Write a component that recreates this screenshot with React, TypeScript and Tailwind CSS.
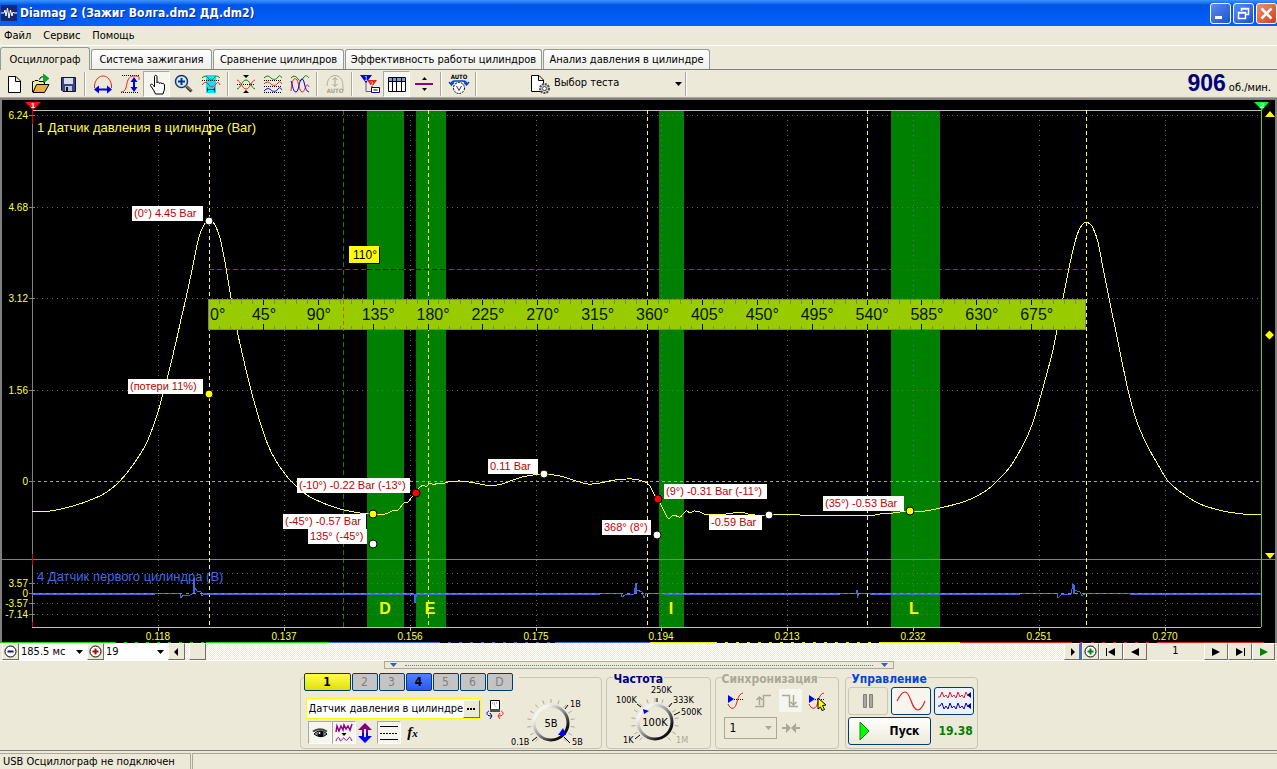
import type { ReactNode } from 'react'
import { clsx } from 'clsx'

const TABS = [
  { label: 'Осциллограф', width: 'w-[90px]' },
  { label: 'Система зажигания', width: 'w-[121px]' },
  { label: 'Сравнение цилиндров', width: 'w-[131px]' },
  { label: 'Эффективность работы цилиндров', width: 'w-[197px]' },
  { label: 'Анализ давления в цилиндре', width: 'w-[167px]' },
]

const TIME_TICKS = [
  { x: 158, label: '0.118' },
  { x: 284, label: '0.137' },
  { x: 410, label: '0.156' },
  { x: 536, label: '0.175' },
  { x: 661, label: '0.194' },
  { x: 787, label: '0.213' },
  { x: 913, label: '0.232' },
  { x: 1039, label: '0.251' },
  { x: 1165, label: '0.270' },
]

const PRESSURE_TICKS = [
  { y: 115, label: '6.24' },
  { y: 207, label: '4.68' },
  { y: 298, label: '3.12' },
  { y: 390, label: '1.56' },
  { y: 481, label: '0' },
]

const SYNC_TICKS = [
  { y: 583, label: '3.57' },
  { y: 593, label: '0' },
  { y: 603, label: '-3.57' },
  { y: 614, label: '-7.14' },
]

const BANDS = [
  { x: 367, w: 37, letter: 'D', at: 385 },
  { x: 416, w: 30, letter: 'E', at: 430 },
  { x: 659, w: 25, letter: 'I', at: 671 },
  { x: 891, w: 49, letter: 'L', at: 914 },
]

const STROKES = [209, 428, 647, 867, 1086]

const CALLOUTS = [
  { x: 132, y: 206, w: 71, text: '(0°) 4.45 Bar' },
  { x: 128, y: 379, w: 75, text: '(потери 11%)' },
  { x: 297, y: 478, w: 113, text: '(-10°) -0.22 Bar (-13°)' },
  { x: 283, y: 514, w: 83, text: '(-45°) -0.57 Bar' },
  { x: 308, y: 529, w: 59, text: '135° (-45°)' },
  { x: 488, y: 459, w: 50, text: '0.11 Bar' },
  { x: 602, y: 520, w: 49, text: '368° (8°)' },
  { x: 664, y: 484, w: 103, text: '(9°) -0.31 Bar (-11°)' },
  { x: 709, y: 515, w: 53, text: '-0.59 Bar' },
  { x: 823, y: 496, w: 81, text: '(35°) -0.53 Bar' },
]

const MARKERS = [
  { x: 209, y: 221, fill: '#ffffff' },
  { x: 209, y: 394, fill: '#ffff00' },
  { x: 373, y: 514, fill: '#ffff00' },
  { x: 373, y: 544, fill: '#ffffff' },
  { x: 416, y: 493, fill: '#ff0000' },
  { x: 544, y: 474, fill: '#ffffff' },
  { x: 658, y: 499, fill: '#ff0000' },
  { x: 657, y: 535, fill: '#ffffff' },
  { x: 769, y: 515, fill: '#ffffff' },
  { x: 910, y: 511, fill: '#ffff00' },
]

const PRESSURE =
  '32,512 50,511 73,506 93,499 107,492 120,481 133,465 147,442 158,412 163,393 168,375 176,342 182,315 186,298 192,270 197,245 200,234 203,227 206,222 209,221 212,222 215,225 220,238 225,262 231,298 237,330 243,357 251,390 260,422 268,445 276,461 285,474 292,482 307,495 323,503 340,509 360,513 373,514 385,514 392,511 398,510 404,503 408,502 412,497 416,492 420,487 424,485 426,487 430,483 434,485 437,483 442,484 448,482 460,481 475,483 485,485 497,485 505,483 513,480 522,477 533,475 543,474 560,476 573,480 588,484 600,483 615,480 632,479 645,482 650,486 654,494 658,499 662,507 667,517 670,518 674,515 680,517 686,511 690,513 694,511 700,512 704,514 712,514 726,514 740,512 748,514 755,515 769,515 785,514 800,515 830,516 875,515 880,514 893,513 900,512 909,511 925,511 940,508 960,503 973,498 987,490 997,481 1010,467 1023,445 1032,425 1039,402 1047,373 1053,350 1057,330 1063,298 1069,268 1075,242 1079,230 1083,224 1086,222 1090,224 1093,228 1098,242 1103,268 1109,298 1117,337 1128,390 1137,422 1147,445 1157,463 1168,481 1182,493 1200,504 1223,511 1243,514 1252,515 1261,514'

const FIRST_CYLINDER =
  'M155 593.500H180L181 598L183 595H190L192 594L193 593L194 578L195 588L197 591L201 592L202 596L204 593.500M414 593.500L415 603L416 597V593.500M600 593.500H621L622 597L625 595L634 594L636 583L637 590L642 592L644 598L646 593.500H664M840 593.500H856L857 590V598L859 593.500H870M1020 593.500H1057L1058 598L1061 595L1071 594L1073 584L1074 590L1080 592L1082 596L1085 593.500H1130'

// left edge of the ruler and pixels per crank degree
const RULER_X = 208
const DEGREE = 878 / 720

// Catmull-Rom spline through "x,y x,y ..." samples
function smooth(samples: string) {
  const p = samples.split(' ').map(s => s.split(',').map(Number))
  const at = (i: number) => p[Math.min(Math.max(i, 0), p.length - 1)]
  let d = `M${p[0][0]} ${p[0][1]}`
  for (let i = 0; i < p.length - 1; i++) {
    const [a, b, c, e] = [at(i - 1), at(i), at(i + 1), at(i + 2)]
    d += `C${b[0] + (c[0] - a[0]) / 6} ${b[1] + (c[1] - a[1]) / 6} ${c[0] - (e[0] - b[0]) / 6} ${c[1] - (e[1] - b[1]) / 6} ${c[0]} ${c[1]}`
  }
  return d
}

function Chart() {
  const minor = Array.from({ length: 79 }, (_, i) => (i + 1) * 9)
  const major = Array.from({ length: 16 }, (_, i) => i * 45)

  return (
    <svg
      viewBox="0 98 1277 545"
      className="block w-full h-auto font-['Liberation_Sans',Arial,sans-serif]"
      role="img"
      aria-label="Осциллограмма давления"
    >
      <rect x="0" y="98" width="1277" height="545" fill="#808080" />
      <rect x="2" y="100" width="1273" height="543" fill="#000" />
      <g shapeRendering="crispEdges" fill="none">
        {BANDS.map(b => (
          <rect key={b.letter} x={b.x} y="110" width={b.w} height="517" fill="#008000" />
        ))}

        {/* grid */}
        {TIME_TICKS.map(t => (
          <path key={t.x} d={`M${t.x + 0.5} 115V627`} stroke="#6b6b6b" strokeDasharray="1 4" />
        ))}
        {[115, 207, 298, 390, 573, 583, 603, 614].map(y => (
          <path key={y} d={`M32 ${y + 0.5}H1261`} stroke="#6b6b6b" strokeDasharray="1 4" />
        ))}
        <path d="M32 481.500H1261" stroke="#a0a0a0" strokeDasharray="3 3" />
        <path d="M209 269.500H1086M343.500 110V627" stroke="#1a7a1a" strokeDasharray="5 3" />
        <path d="M367 269.500H404M416 269.500H446" stroke="#000" strokeDasharray="5 3" />

        {/* axes */}
        <path d="M32 110.500H1261M32 627.500H1261" stroke="#c0c0c0" />
        <path d="M32.500 110V627M2 559.500H1275" stroke="#808080" />
        {[...PRESSURE_TICKS, ...SYNC_TICKS].map(t => (
          <path key={t.y} d={`M29 ${t.y + 0.5}H35`} stroke="#808080" />
        ))}
        {TIME_TICKS.map(t => (
          <path key={t.x} d={`M${t.x + 0.5} 628V631`} stroke="#c0c0c0" />
        ))}
        {STROKES.map(x => (
          <path key={x} d={`M${x + 0.5} 110V627`} stroke="#ffff40" strokeDasharray="4 3" />
        ))}
        <path d="M32.500 103V124M32.500 554V565M32.500 622V627" stroke="#e00000" />
        <path d="M1261.500 104V627" stroke="#40d050" />

        {/* signals */}
        <path d={smooth(PRESSURE)} stroke="#ffff55" />
        <path d="M32 594H155M204 594H414M416 594H600M664 594H840M870 594H1020M1130 594H1261" stroke="#4169e1" strokeWidth="2" />
        <path d={FIRST_CYLINDER} stroke="#4169e1" />
        <path d="M194 594V580M636 594V584M1074 594V585M415 594V602" stroke="#4169e1" strokeWidth="2" />
        <path d="M32 593.500H1261" stroke="#7d90b8" strokeDasharray="3 4" />
      </g>

      {/* crank angle ruler */}
      <g shapeRendering="crispEdges">
        <rect x="208.500" y="299.500" width="877" height="30" fill="#99cc00" stroke="#808080" />
        {minor.map(d => (
          <path
            key={d}
            d={
              d % 45 === 0
                ? `M${Math.round(RULER_X + d * DEGREE) + 0.5} 300v5m0 19v6`
                : `M${Math.round(RULER_X + d * DEGREE) + 0.5} 300v4m0 22v4`
            }
            stroke={d % 45 === 0 ? '#000' : '#808080'}
          />
        ))}
        <path d="M343.500 300V329" stroke="#b06a00" strokeDasharray="4 3" />
      </g>
      {major.map(d => (
        <text key={d} x={RULER_X + d * DEGREE - (d === 0 ? -2 : 11)} y="320" fontSize="16" fill="#0a1400">
          {`${d}°`}
        </text>
      ))}

      <rect x="350" y="247" width="30" height="17" fill="#000" />
      <rect x="349" y="246" width="30" height="17" fill="#ffff00" />
      <text x="353" y="259" fontSize="12">110°</text>

      {CALLOUTS.map(c => (
        <g key={c.text}>
          <rect x={c.x} y={c.y} width={c.w} height="15" fill="#fff" />
          <text x={c.x + 2} y={c.y + 11} fontSize="11" fill="#c00000">{c.text}</text>
        </g>
      ))}
      {MARKERS.map(m => (
        <circle key={`${m.x}-${m.y}`} cx={m.x} cy={m.y} r="4" fill={m.fill} stroke="#000" />
      ))}

      <text x="37" y="132" fontSize="13" fill="#ffff40">1 Датчик давления в цилиндре (Bar)</text>
      <text x="37" y="581" fontSize="13" fill="#4169e1">4 Датчик первого цилиндра (B)</text>
      {BANDS.map(b => (
        <text key={b.letter} x={b.at} y="614" fontSize="16" fontWeight="700" fill="#ffff00" textAnchor="middle">
          {b.letter}
        </text>
      ))}
      {[...PRESSURE_TICKS, ...SYNC_TICKS].map(t => (
        <text key={t.y} x="28" y={t.y + 4} fontSize="10" fill="#ffff40" textAnchor="end">{t.label}</text>
      ))}
      {TIME_TICKS.map(t => (
        <text key={t.x} x={t.x} y="640" fontSize="10" fill="#ffff40" textAnchor="middle">{t.label}</text>
      ))}

      {/* cursors and scale handles */}
      <path d="M25 102H41L33 110Z" fill="#ff1010" />
      <path d="M1254 102H1269L1262 110Z" fill="#00ff20" />
      <text x="33" y="108" fontSize="8" fontWeight="700" fill="#fff" textAnchor="middle">1</text>
      <text x="1262" y="108" fontSize="8" fontWeight="700" fill="#fff" textAnchor="middle">2</text>
      <path d="M1265 117H1275L1270 111ZM1265 553H1275L1270 559ZM1265 335L1269.500 330.500L1274 335L1269.500 339.500Z" fill="#ffff00" />

      {/* memory strip */}
      <g shapeRendering="crispEdges" fill="none">
        <path d="M2 642.500H330" stroke="#00e000" />
        <path d="M330 642.500H650" stroke="#4169e1" />
        <path d="M650 642.500H960" stroke="#e8e800" />
        <path d="M960 642.500H1264" stroke="#e02020" />
        <path d="M116 642.500H206M440 642.500H555M717 642.500H880M1072 642.500H1160" stroke="#000" strokeDasharray="8 3" />
      </g>
    </svg>
  )
}

function Icon({ children, className = 'w-[22px] h-[22px]', box = '0 0 22 22' }: { children: ReactNode; className?: string; box?: string }) {
  return (
    <svg viewBox={box} className={clsx('shrink-0', className)} fill="none" aria-hidden="true">
      {children}
    </svg>
  )
}

const ICONS: Record<string, ReactNode> = {
  new: <path d="M5.500 3.500H13L17.500 8V19.500H5.500ZM12.500 4V8.500H17" fill="#fff" stroke="#000" />,
  open: (
    <>
      <path d="M2.500 19V8.500H4L5 7.500H8L9 8.500H14.500V12" fill="#ffe890" stroke="#000" />
      <path d="M3 19.500L6.500 11.500H19L14.500 19.500Z" fill="#e8b040" stroke="#000" />
      <path d="M9.500 6.500C10 4 12 3.500 13.500 4" stroke="#000" />
      <path d="M13.500 1L19 5.500L13.500 10Z" fill="#00b020" stroke="#006010" strokeWidth=".5" />
    </>
  ),
  save: (
    <>
      <path d="M4.500 4.500H18.500V18.500H6L4.500 17Z" fill="#3c4488" stroke="#101030" />
      <path d="M7 5H16V11H7Z" fill="#d8dce8" />
      <path d="M8 13H15V18H8Z" fill="#c0c4d0" />
      <path d="M9 14H11V18H9Z" fill="#101030" />
    </>
  ),
  fitX: (
    <>
      <path d="M2.500 15V12C4 5 8 3 11 3S18 5 19.500 12V15" stroke="#f02020" />
      <path d="M5 16.500H17" stroke="#0000e0" strokeWidth="2" />
      <path d="M2 16.500L7 12.500V20.500ZM20 16.500L15 12.500V20.500Z" fill="#0000e0" />
    </>
  ),
  fitY: (
    <>
      <path d="M3 2.500H20M2 19.500H20" stroke="#000" strokeDasharray="1 1" />
      <path d="M2 19C8 19 7 11 9 7S13 3 17 3S20 5 20 7" stroke="#f02020" />
      <path d="M15 8V16" stroke="#0000e0" strokeWidth="2" />
      <path d="M15 4L11.500 9H18.500ZM15 19L11.500 14H18.500Z" fill="#0000e0" />
    </>
  ),
  hand: (
    <path
      d="M9.500 21L7.500 17L4.500 12.500C4 11 6 10.500 7.500 12.500L8.500 14V3.500C8.500 2 11 2 11 3.500V10C11 8.800 13.500 8.800 13.500 10.500C13.500 9.500 16 9.500 16 11C16 10 18.500 10.500 18.500 12V16L17 21Z"
      fill="#fff"
      stroke="#000"
    />
  ),
  zoom: (
    <>
      <path d="M13.500 13.500L18.500 18.500" stroke="#303030" strokeWidth="3" />
      <path d="M13.500 13L18 17.500" stroke="#e8c060" />
      <circle cx="8.500" cy="8.500" r="6" fill="#c8f0ff" stroke="#203070" strokeWidth="1.500" />
      <path d="M5 8.500H12M8.500 5V12" stroke="#103080" strokeWidth="2" />
    </>
  ),
  slice: (
    <>
      <path d="M6 2H16V20H6Z" fill="#00e8f0" />
      <path d="M2 5C5 2 7 3 9 6S13 6 15 4S19 4 20 5" stroke="#008000" />
      <path d="M2 7.500H20" stroke="#000" strokeDasharray="1 1" />
      <path d="M2 12C5 8 7 9 9 12S14 14 16 11S19 10 20 12" stroke="#f02020" />
      <path d="M7 16.500H15M7.500 14.500V18.500M14.500 14.500V18.500" stroke="#0000a0" />
    </>
  ),
  center: (
    <>
      <path d="M8 2H14L11 5ZM8 20H14L11 17Z" fill="#000" />
      <path d="M2 11.500H20" stroke="#000" strokeDasharray="1 1" />
      <path d="M2 16C6 15 7 7 11 7S16 15 20 16" stroke="#008000" />
      <path d="M2 7C6 8 7 16 11 16S16 8 20 7" stroke="#f02020" />
    </>
  ),
  spread: (
    <>
      <path d="M2 7.500H20M2 13.500H20M2 19.500H20" stroke="#000" strokeDasharray="1 1" />
      <path d="M2 5C5 2 7 3 9 5S14 7 16 4S19 4 20 5" stroke="#008000" />
      <path d="M2 11C5 8 7 9 9 11S14 13 16 10S19 10 20 11" stroke="#f02020" />
      <path d="M2 18C5 15 7 15 9 17S14 19 16 16S19 16 20 17" stroke="#0000e0" />
    </>
  ),
  overlay: (
    <>
      <path d="M2 5C5 2 7 3 9 6S13 7 15 4S19 4 20 5" stroke="#008000" />
      <path d="M2 18C3 5 6 4 8 7S10 18 13 19S17 7 20 14" stroke="#f02020" />
      <path d="M2 8C4 13 4 19 7 19S10 6 13 6S15 18 20 19" stroke="#0000e0" />
    </>
  ),
  autoScale: (
    <>
      <path d="M3 13C3 6 7 2.500 11 2.500S19 6 19 13V18" stroke="#b0ad9c" />
      <path d="M11 5V13M8.500 7L11 4.500L13.500 7M8.500 11L11 13.500L13.500 11" stroke="#a5a290" />
      <text x="11" y="20" fontSize="6" fontWeight="700" textAnchor="middle" fill="#a5a290">AUTO</text>
    </>
  ),
  cursors: (
    <>
      <path d="M7 8V18.500H12M13 12V15" stroke="#606080" />
      <path d="M8 7H18L13 14Z" fill="#e02020" />
      <path d="M1 2H13L7 10Z" fill="#0000e0" />
      <path d="M12.500 14.500H20.500V19.500H12.500Z" fill="#fff" stroke="#000080" />
      <path d="M14.500 17H18.500" stroke="#000" />
      <text x="7" y="8" fontSize="7" fill="#fff" textAnchor="middle">1</text>
      <text x="13" y="13" fontSize="6" fill="#fff" textAnchor="middle">2</text>
    </>
  ),
  table: (
    <>
      <path d="M2.500 4.500H19.500V18.500H2.500Z" fill="#fff" stroke="#000" />
      <path d="M3 5H19V8H3Z" fill="#70a0e0" />
      <path d="M2 8.500H20M6.500 5V18M10.500 5V18M15.500 5V18" stroke="#000" />
    </>
  ),
  divide: (
    <>
      <path d="M2 11H20" stroke="#900080" strokeWidth="2" />
      <path d="M9 7H14L11.500 4ZM9 15H14L11.500 18Z" fill="#000" />
    </>
  ),
  autoV: (
    <>
      <text x="11" y="6" fontSize="6" fontWeight="700" textAnchor="middle" fill="#000">AUTO</text>
      <path d="M3 11C4 7 7 8 11 8S18 7 19 11M1 9L3.500 12L6 9.500M21 9L18.500 12L16 9.500" stroke="#0040e0" strokeWidth="1.500" />
      <circle cx="11" cy="15" r="5.500" fill="#fff" stroke="#000" strokeDasharray="2 1" />
      <path d="M8.500 13L11 17.500L13.500 13" stroke="#303080" />
    </>
  ),
  test: (
    <>
      <path d="M1.500 1.500H9L13.500 6V17.500H1.500ZM8.500 2V6.500H13" fill="#fff" stroke="#000" />
      <circle cx="14.500" cy="14.500" r="4.500" fill="#c8c8c8" stroke="#505050" strokeWidth="2" strokeDasharray="2 1" />
      <circle cx="14.500" cy="14.500" r="2" fill="#fff" stroke="#505050" />
    </>
  ),
}

const TOOLBAR = [
  ['new', 'open', 'save'],
  ['fitX', 'fitY', 'hand', 'zoom', 'slice'],
  ['center', 'spread', 'overlay'],
  ['autoScale'],
  ['cursors', 'table', 'divide'],
  ['autoV'],
]

const PRESSED = ['hand', 'table']

function Separator() {
  return (
    <div className="w-2 shrink-0 flex justify-center">
      <div className="w-[2px] h-6 border-l border-[#aca899] bg-white" />
    </div>
  )
}

function Toolbar() {
  return (
    <div className="flex items-center h-7 border-b border-[#aca899]">
      {TOOLBAR.map((group, i) => (
        <div key={group[0]} className="flex items-center">
          {i > 0 && <Separator />}
          {group.map(name => (
            <button
              key={name}
              type="button"
              aria-label={name}
              className={clsx(
                'w-[27px] h-[26px] flex items-center justify-center',
                PRESSED.includes(name) && 'border border-[#aca899] border-r-white border-b-white bg-[#f6f5ee]'
              )}
            >
              <Icon>{ICONS[name]}</Icon>
            </button>
          ))}
        </div>
      ))}
      <Separator />
      <button type="button" className="ml-[50px] w-[152px] flex items-center gap-1 text-[11px]">
        <Icon className="w-5 h-5" box="0 0 20 20">{ICONS.test}</Icon>
        <span className="flex-1 text-left">Выбор теста</span>
        <Caret />
      </button>
      <Separator />
      <div className="ml-auto pr-[6px] flex items-baseline gap-[3px] whitespace-nowrap">
        <span className="font-['Liberation_Sans',Arial,sans-serif] font-bold text-[23px] leading-6 text-[#000078]">906</span>
        <span className="text-[11px]">об./мин.</span>
      </div>
    </div>
  )
}

function Caret({ className = 'fill-black' }: { className?: string }) {
  return (
    <svg viewBox="0 0 7 4" className={clsx('w-[7px] h-1 shrink-0', className)} aria-hidden="true">
      <path d="M0 0H7L3.500 4Z" />
    </svg>
  )
}

function TitleBar() {
  const frame = 'w-[21px] h-[21px] rounded-[3px] border border-white flex items-center justify-center'
  return (
    <header className="h-[26px] flex items-center pl-px bg-linear-to-b from-[#3c93ff] via-[#0054e8] via-20% to-[#0062fc]">
      <Icon className="w-4 h-4" box="0 0 16 16">
        <rect width="16" height="16" fill="#182870" />
        <path d="M0 8H3L4 5L5 11L6.500 3L8 13L9.500 5L11 11L12 7L13 8H16" stroke="#fff" />
      </Icon>
      <h1 className="ml-[3px] text-[12px] font-bold text-white leading-none [text-shadow:1px_1px_0_#0b2a80]">
        Diamag 2 (Зажиг Волга.dm2 ДД.dm2)
      </h1>
      <div className="ml-auto flex gap-[2px]">
        <button type="button" aria-label="Свернуть" className={clsx(frame, 'bg-linear-to-br from-[#5a8cf0] to-[#1c50d0]')}>
          <Icon className="w-[19px] h-[19px]" box="0 0 19 19"><path d="M4 13.500H11" stroke="#fff" strokeWidth="3" /></Icon>
        </button>
        <button type="button" aria-label="Восстановить" className={clsx(frame, 'bg-linear-to-br from-[#5a8cf0] to-[#1c50d0]')}>
          <Icon className="w-[19px] h-[19px]" box="0 0 19 19">
            <path d="M7.500 7V4.500H14.500V10.500H12M7 5H15" stroke="#fff" strokeWidth="1.500" />
            <path d="M4.500 8.500H11.500V14.500H4.500ZM4 9H12" stroke="#fff" strokeWidth="1.500" />
          </Icon>
        </button>
        <button type="button" aria-label="Закрыть" className={clsx(frame, 'bg-linear-to-br from-[#f0906c] to-[#d03a10]')}>
          <Icon className="w-[19px] h-[19px]" box="0 0 19 19"><path d="M4.500 4.500L14.500 14.500M14.500 4.500L4.500 14.500" stroke="#fff" strokeWidth="2.500" /></Icon>
        </button>
      </div>
    </header>
  )
}

const RAISED = 'border border-[#fffffe] border-r-[#716f64] border-b-[#716f64] bg-[#ece9d8] flex items-center justify-center shrink-0'

function NavButton({ label, path, className, color = 'fill-black' }: { label: string; path: string; className: string; color?: string }) {
  return (
    <button type="button" aria-label={label} className={clsx(RAISED, 'h-[17px]', className)}>
      <svg viewBox="0 0 10 8" className={clsx('w-[10px] h-2', color)}>
        <path d={path} />
      </svg>
    </button>
  )
}

function ZoomButton({ label, plus, color, className }: { label: string; plus?: boolean; color: string; className?: string }) {
  return (
    <button type="button" aria-label={label} className={clsx(RAISED, 'w-[17px] h-[17px]', className)}>
      <Icon className="w-[13px] h-[13px]" box="0 0 13 13">
        <circle cx="6.500" cy="6.500" r="5.500" fill="#fff" stroke="#000" />
        <path d={plus ? 'M3.500 6.500H9.500M6.500 3.500V9.500' : 'M3.500 6.500H9.500'} stroke={color} strokeWidth="2" />
      </Icon>
    </button>
  )
}

function Dropdown({ label, value, className, disabled }: { label: string; value: string; className: string; disabled?: boolean }) {
  return (
    <label className={clsx('grid items-center shrink-0', className)}>
      <select
        aria-label={label}
        disabled={disabled}
        className="appearance-none col-start-1 row-start-1 w-full bg-transparent pl-[2px] leading-4 text-black outline-none"
      >
        <option>{value}</option>
      </select>
      <span className="col-start-1 row-start-1 justify-self-end pr-1 pointer-events-none">
        <Caret className={disabled ? 'fill-[#aca899]' : 'fill-black'} />
      </span>
    </label>
  )
}

function TimeBar() {
  return (
    <div className="flex items-center h-[17px] px-[2px] text-[11px]">
      <ZoomButton label="Уменьшить" color="#101090" />
      <Dropdown label="Развёртка" value="185.5 мс" className="w-[68px] h-[17px] bg-white" />
      <ZoomButton label="Увеличить" plus color="#a01010" />
      <Dropdown label="Кадр" value="19" className="w-[64px] h-[17px] bg-white" />
      <div className="flex-1 h-[17px] flex bg-[conic-gradient(#fff_25%,#ece9d8_0_50%,#fff_0_75%,#ece9d8_0)] bg-size-[2px_2px]">
        <NavButton label="Прокрутить влево" className="w-[17px]" path="M2 4L6 0V8Z" />
        <div className={clsx(RAISED, 'ml-1 w-[17px] h-[17px]')} />
        <NavButton label="Прокрутить вправо" className="ml-auto w-[16px]" path="M8 4L4 0V8Z" />
      </div>
      <div className="w-[2px] h-[17px] bg-[#4169e1]" />
      <ZoomButton label="Добавить" plus color="#008000" />
      <NavButton label="В начало" className="w-6" path="M0 0H1V8H0ZM2 4L9 0V8Z" />
      <NavButton label="Назад" className="w-6" path="M1 4L9 0V8Z" />
      <output className="w-[57px] text-center">1</output>
      <NavButton label="Вперёд" className="w-6" path="M9 4L1 0V8Z" />
      <NavButton label="В конец" className="w-6" path="M9 0H10V8H9ZM8 4L1 0V8Z" />
      <NavButton label="Воспроизвести" className="w-[23px]" path="M9 4L1 0V8Z" color="fill-[#008000]" />
    </div>
  )
}

interface KnobLabel {
  x: number
  y: number
  text: string
  muted?: boolean
}

function Knob({ id, cx, value, pointer, labels, ticks, width, className }: {
  id: string
  cx: number
  value: string
  pointer: string
  labels: KnobLabel[]
  ticks: string
  width: number
  className?: string
}) {
  return (
    <svg viewBox={`0 0 ${width} 68`} className={clsx('h-[68px] shrink-0', className)} role="img" aria-label={value}>
      <defs>
        <linearGradient id={id} x1="0" y1="0" x2="1" y2="1">
          <stop offset="0.2" stopColor="#f4f4f0" />
          <stop offset="0.5" stopColor="#909090" />
          <stop offset="0.8" stopColor="#101010" />
        </linearGradient>
      </defs>
      {Array.from({ length: 15 }, (_, i) => i * 20 - 230).map(a => (
        <path
          key={a}
          d={`M${cx + 20 * Math.cos((a * Math.PI) / 180)} ${42 + 20 * Math.sin((a * Math.PI) / 180)}L${cx + 24 * Math.cos((a * Math.PI) / 180)} ${42 + 24 * Math.sin((a * Math.PI) / 180)}`}
          stroke="#aca899"
        />
      ))}
      <path d={ticks} stroke="#000" />
      <circle cx={cx} cy="42" r="17" fill="#ece9d8" stroke={`url(#${id})`} strokeWidth="3" />
      <path d={pointer} fill="#0000ff" />
      <text x={cx} y="46" fontSize="11" textAnchor="middle">{value}</text>
      {labels.map(l => (
        <text key={l.text} x={l.x} y={l.y} fontSize="9" fill={l.muted ? '#aca899' : '#000'}>{l.text}</text>
      ))}
    </svg>
  )
}

function Group({ legend, tone, className, children }: { legend: ReactNode; tone?: string; className: string; children: ReactNode }) {
  return (
    <fieldset className={clsx('h-[76px] rounded-[4px] border border-[#c8c5b4] shrink-0 min-w-0', className)}>
      <legend className={clsx('h-2 leading-3 text-[12px] font-bold whitespace-nowrap', tone)}>{legend}</legend>
      {children}
    </fieldset>
  )
}

const CHANNELS = [
  { label: '1', style: 'w-[47px] bg-linear-to-b from-[#ffff40] to-[#e0e000] font-bold text-black' },
  { label: '2', style: 'w-[26px] bg-[#c4c4c4] font-normal text-[#808080]' },
  { label: '3', style: 'w-[26px] bg-[#c4c4c4] font-normal text-[#808080]' },
  { label: '4', style: 'w-[26px] bg-linear-to-b from-[#5080ff] to-[#2858f8] font-bold text-black' },
  { label: '5', style: 'w-[26px] bg-[#c4c4c4] font-normal text-[#808080]' },
  { label: '6', style: 'w-[26px] bg-[#c4c4c4] font-normal text-[#808080]' },
  { label: 'D', style: 'w-[26px] bg-[#c4c4c4] font-normal text-[#808080]' },
]

function ChannelGroup() {
  const toggled = 'w-6 h-[23px] flex items-center justify-center border border-[#aca899] border-r-white border-b-white bg-[#f6f5ee]'
  return (
    <Group
      className="w-[302px] pl-[3px]"
      legend={
        <div className="flex gap-px pr-[6px]">
          {CHANNELS.map(c => (
            <button
              key={c.label}
              type="button"
              className={clsx('h-[18px] text-[12px] leading-none rounded-[2px] border border-[#003c74]', c.style)}
            >
              {c.label}
            </button>
          ))}
        </div>
      }
    >
      <div className="flex">
        <div className="w-[202px] pt-[17px] pl-[2px]">
          <div className="flex items-center gap-[5px]">
            <div className="flex items-center w-[175px] h-[21px] border border-[#ffff00] bg-white">
              <input
                aria-label="Название канала"
                defaultValue="Датчик давления в цилиндре"
                className="flex-1 min-w-0 pl-[2px] text-[11px] leading-4 outline-none"
              />
              <button type="button" aria-label="Выбрать датчик" className={clsx(RAISED, 'w-[17px] h-[18px]')}>
                <Icon className="w-2 h-[2px]" box="0 0 8 2"><path d="M0 1H2M3 1H5M6 1H8" stroke="#000" strokeWidth="2" /></Icon>
              </button>
            </div>
            <button type="button" aria-label="Калибровка">
              <Icon className="w-[18px] h-5" box="0 0 18 20">
                <path d="M4.500 1.500H13.500V12.500H4.500Z" fill="#fff" stroke="#000" />
                <path d="M4 10H14V13H4Z" fill="#505050" />
                <path d="M6 4H12M8 5L10 8" stroke="#707070" strokeDasharray="1 1" />
                <path d="M3 12C0 13 0 17 5 17M4 14L6 17L4 20" stroke="#000090" />
                <path d="M15 12C18 13 18 17 13 17M14 14L12 17L14 20" stroke="#f02020" />
              </Icon>
            </button>
          </div>
          <div className="flex items-center mt-[2px] pl-[2px]">
            <button type="button" aria-label="Показать" className={toggled}>
              <Icon className="w-4 h-4" box="0 0 16 16">
                <path d="M2 9C5 5 11 5 15 9C11 13 6 12 2 9Z" fill="#909090" stroke="#000" />
                <path d="M1 6.500C5 3.500 10 3.500 15 6.500" stroke="#404040" strokeWidth="2" />
                <circle cx="8.500" cy="9" r="3" fill="#000" />
                <circle cx="7.500" cy="8" r="1" fill="#fff" />
              </Icon>
            </button>
            <button type="button" aria-label="Фильтр" className={toggled}>
              <Icon className="w-[18px] h-5" box="0 0 18 20">
                <path d="M1 9L2 3L4 8L6 3L8 7L9 2L11 6L13 3L15 7L17 1" stroke="#900090" strokeWidth="1.500" />
                <path d="M6.500 10H11.500L9 13Z" fill="#000" />
                <path d="M1 18C3 13 4 14 5 17S8 14 9 15S11 19 13 16S15 14 17 18" stroke="#900090" />
              </Icon>
            </button>
            <button type="button" aria-label="Инвертировать" className="w-[18px] h-[23px] flex items-center justify-center">
              <Icon className="w-4 h-5" box="0 0 16 20">
                <path d="M8 0L15 7H11V10H5V7H1Z" fill="#800080" />
                <path d="M8 20L15 13H11V10H5V13H1Z" fill="#0000ff" />
                <path d="M8 6V14" stroke="#ece9d8" strokeWidth="2" />
              </Icon>
            </button>
            <button type="button" aria-label="Уровни" className={clsx(toggled, 'ml-[3px]')}>
              <Icon className="w-5 h-5" box="0 0 20 20">
                <path d="M1 3.500H19M1 16.500H19" stroke="#000" />
                <path d="M1 10.500H19" stroke="#000" strokeDasharray="2 1" />
              </Icon>
            </button>
            <button type="button" aria-label="Функция" className="w-6 h-[23px] font-['Liberation_Serif',serif] italic font-bold text-[15px] leading-5">
              f<span className="text-[11px]">x</span>
            </button>
          </div>
        </div>
        <Knob
          id="gain"
          width={94}
          className="w-[94px]"
          cx={45}
          value="5В"
          pointer="M52 54L57 47L60 54Z"
          ticks="M59 28L62 24M58 56L64 62M31 56L26 60"
          labels={[
            { x: 64, y: 26, text: '1В' },
            { x: 5, y: 64, text: '0.1В' },
            { x: 66, y: 64, text: '5В' },
          ]}
        />
      </div>
    </Group>
  )
}

const SYNC_ICONS = [
  {
    name: 'Уровень',
    drawing: (
      <>
        <path d="M2 4L8 8L2 12Z" fill="#0000ff" />
        <path d="M8 8.500H18" stroke="#0000a0" strokeDasharray="1 1" />
        <path d="M2 13C4 18 8 19 10 14S12 3 17 2" stroke="#e02020" />
      </>
    ),
  },
  { name: 'Фронт', drawing: <path d="M2 15.500H10.500V4.500H18M6.500 14V7M3.500 9L6.500 6L9.500 9" stroke="#aca899" strokeWidth="1.500" /> },
  { name: 'Спад', drawing: <path d="M2 4.500H9.500V15.500H18M13.500 4V14M10.500 11L13.500 14L16.500 11" stroke="#aca899" strokeWidth="1.500" /> },
  {
    name: 'Выбрать уровень',
    drawing: (
      <>
        <path d="M2 4L8 8L2 12Z" fill="#0000ff" />
        <path d="M8 8.500H18" stroke="#0000a0" strokeDasharray="1 1" />
        <path d="M2 13C4 18 8 19 10 14S12 3 17 2" stroke="#e02020" />
        <path d="M11 7L19 14L15.500 14.500L17.500 18.500L15 19.500L13.500 16L11 18Z" fill="#ffff00" stroke="#000" />
      </>
    ),
  },
]

function ControlPanel() {
  const xp = 'rounded-[3px] border border-[#003c74] flex items-center justify-center'
  return (
    <section className="flex flex-col items-center pb-px border-t border-white">
      <div className="w-[510px] h-2 border border-[#aca899] flex items-center justify-between px-[5px]">
        <Caret className="fill-[#3060c0]" />
        <div className="flex-1 mx-2 border-t border-dotted border-[#6080b0]" />
        <Caret className="fill-[#3060c0]" />
      </div>
      <div className="flex justify-center mt-1">
        <ChannelGroup />
        <Group legend="Частота" tone="text-[#000080] ml-[6px] px-px" className="w-[105px] ml-1">
          <Knob
            id="rate"
            width={103}
            className="w-[103px] -mt-px"
            cx={48}
            value="100K"
            pointer="M36 29L42 31L37 34Z"
            ticks="M34 27L30 24M50 18V22M62 27L65 23M67 35L73 32M33 55L28 59"
            labels={[
              { x: 9, y: 23, text: '100K' },
              { x: 44, y: 13, text: '250K' },
              { x: 66, y: 23, text: '333K' },
              { x: 74, y: 35, text: '500K' },
              { x: 69, y: 63, text: '1M', muted: true },
              { x: 16, y: 63, text: '1K' },
            ]}
          />
        </Group>
        <Group legend="Синхронизация" tone="text-[#aca899] ml-[6px]" className="w-[124px] ml-1">
          <div className="flex gap-1 mt-2 pl-[9px]">
            {SYNC_ICONS.map(icon => (
              <button
                key={icon.name}
                type="button"
                aria-label={icon.name}
                className={clsx('w-[23px] h-[23px] flex items-center justify-center', icon.name === 'Спад' && 'bg-[#f6f5ee]')}
              >
                <Icon className="w-5 h-5" box="0 0 20 20">{icon.drawing}</Icon>
              </button>
            ))}
          </div>
          <div className="flex items-center mt-[5px] pl-2 gap-[5px] text-[12px]">
            <Dropdown label="Канал синхронизации" value="1" disabled className="w-[53px] h-[22px] border border-[#aca899] pl-[3px]" />
            <Icon className="w-[18px] h-[10px]" box="0 0 18 10">
              <path d="M0 4H4V0L9 5L4 10V6H0ZM18 4H14V0L9 5L14 10V6H18Z" fill="#aca899" />
            </Icon>
          </div>
        </Group>
        <Group legend="Управление" tone="text-[#0046d5] ml-[5px] px-px" className="w-[133px] ml-[6px]">
          <div className="flex gap-[3px] mt-[6px] pl-[2px]">
            <button type="button" aria-label="Пауза" className="w-10 h-7 rounded-[3px] border border-[#c9c7ba] flex items-center justify-center">
              <Icon className="w-3 h-4" box="0 0 12 16"><path d="M1.500 1.500H4.500V14.500H1.500ZM7.500 1.500H10.500V14.500H7.500Z" fill="#aca899" stroke="#808080" /></Icon>
            </button>
            <button type="button" aria-label="Синус" className={clsx(xp, 'w-10 h-7 bg-[#f6f5ee]')}>
              <Icon className="w-[30px] h-5" box="0 0 30 20"><path d="M1 10C4 4 6 1 9 1C15 1 15 19 22 19C25 19 27 15 29 10" stroke="#e02020" strokeWidth="1.200" /></Icon>
            </button>
            <button type="button" aria-label="Многоканальный режим" className={clsx(xp, 'w-10 h-7 bg-[#eef2ff]')}>
              <Icon className="w-[34px] h-[22px]" box="0 0 34 22">
                <path d="M1 7H3L5 2L7 7L9 5L11 8L13 2L15 7L17 5L19 8L21 2L23 7L25 5L27 8L29 2L31 6" stroke="#e02020" />
                <path d="M1 16H3L5 13L7 19L9 16L11 19L13 13L15 18L17 16L19 19L21 13L23 18L25 16L27 19L29 13L31 17" stroke="#0000c0" />
                <path d="M34 2L30 5L34 8ZM34 13L30 16L34 19Z" fill="#0000a0" />
              </Icon>
            </button>
          </div>
          <div className="flex items-center mt-[2px] pl-[2px]">
            <button type="button" className={clsx(xp, 'w-[83px] h-7 gap-5 text-[12px] font-bold bg-linear-to-b from-white to-[#ece9d8]')}>
              <Icon className="w-[11px] h-5" box="0 0 11 20"><path d="M1 1L10 10L1 19Z" fill="#00ff00" stroke="#009000" /></Icon>
              Пуск
            </button>
            <output className="ml-2 text-[12px] font-bold text-[#008000]">19.38</output>
          </div>
        </Group>
      </div>
    </section>
  )
}

export default function App() {
  return (
    <div className="min-h-screen flex flex-col bg-[#ece9d8] text-black text-[11px] font-['DejaVu_Sans_Condensed','DejaVu_Sans',sans-serif]">
      <TitleBar />
      <nav className="h-5 flex items-center gap-3 pl-1 border-b border-white leading-none">
        <a href="#file">Файл</a>
        <a href="#service">Сервис</a>
        <a href="#help">Помощь</a>
      </nav>
      <div className="h-6 flex items-end gap-px border-b border-[#808080]" role="tablist">
        {TABS.map((tab, i) => (
          <button
            key={tab.label}
            type="button"
            role="tab"
            aria-selected={i === 0}
            className={clsx(
              'rounded-t-[3px] border border-b-0 border-[#919b9c] whitespace-nowrap shrink-0 leading-none',
              tab.width,
              i === 0 ? 'h-[23px] bg-[#ece9d8] -mb-px' : 'h-5 bg-linear-to-b from-white to-[#f0efe8]'
            )}
          >
            {tab.label}
          </button>
        ))}
      </div>
      <Toolbar />
      <Chart />
      <TimeBar />
      <ControlPanel />
      <footer className="mt-auto h-5 flex border-t border-[#808080] pt-[2px]">
        <div className="w-[191px] border-t border-r border-[#aca899] pl-[3px] leading-4 whitespace-nowrap">
          USB Осциллограф не подключен
        </div>
        <div className="flex-1 ml-px border-t border-l border-[#aca899]" />
      </footer>
    </div>
  )
}
